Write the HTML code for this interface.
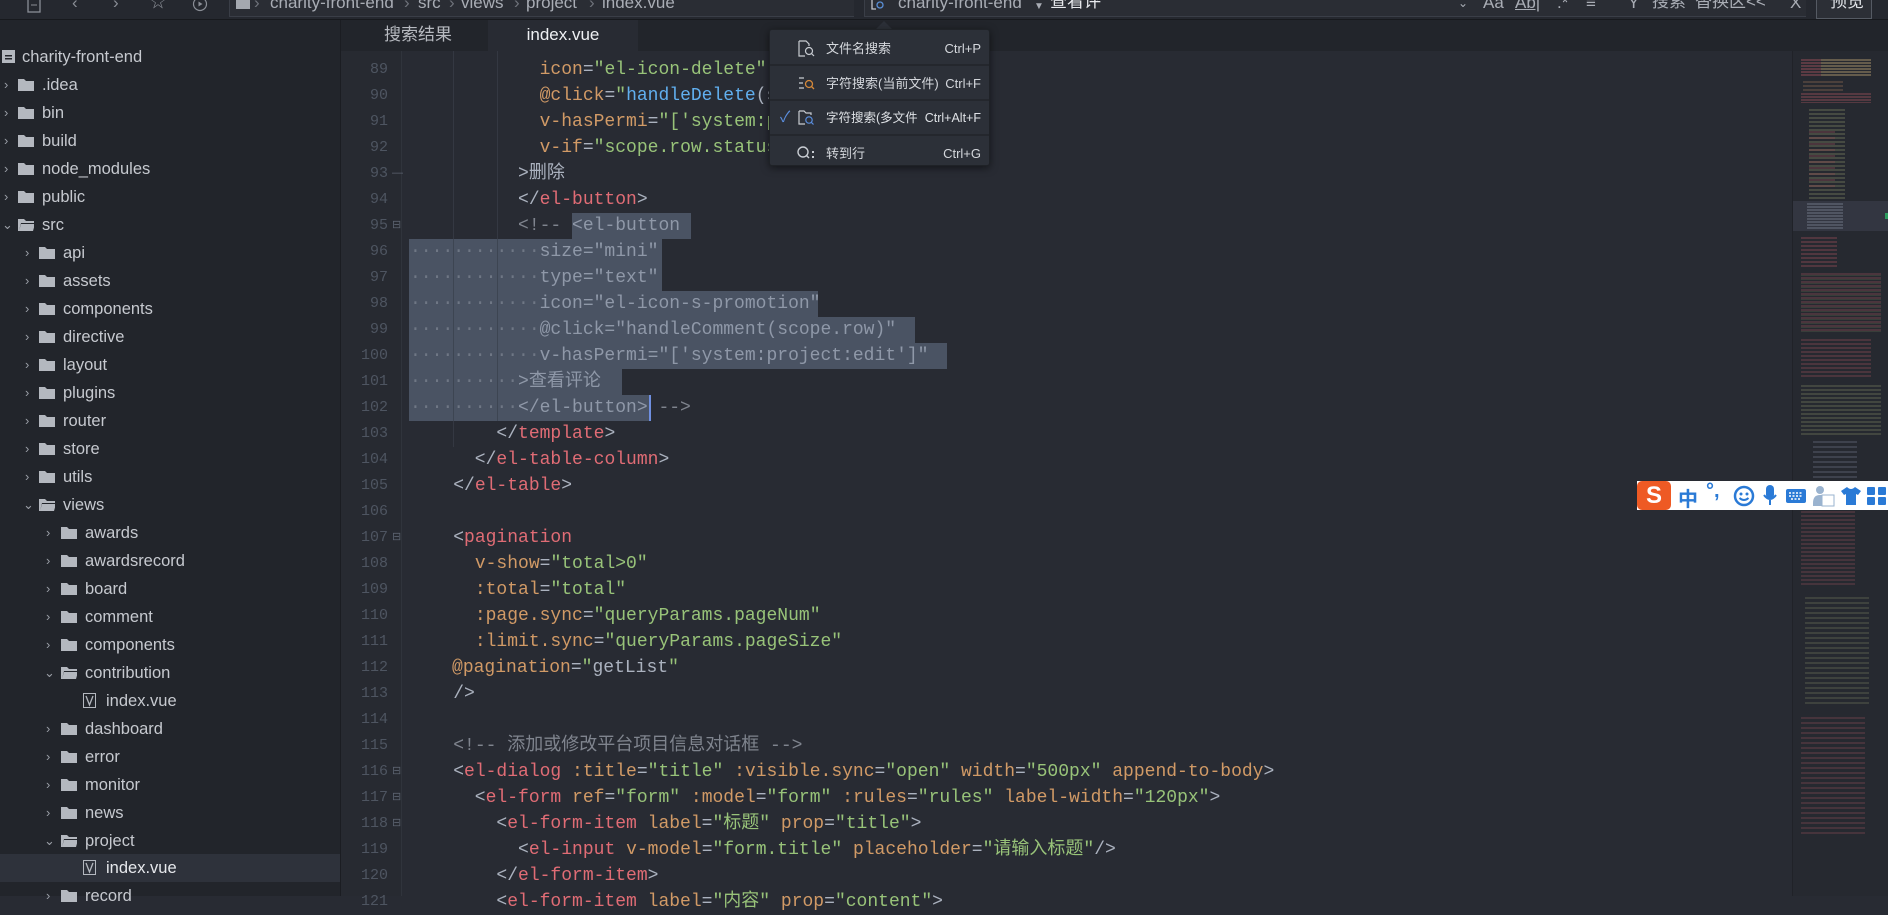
<!DOCTYPE html>
<html><head><meta charset="utf-8">
<style>
*{margin:0;padding:0;box-sizing:border-box}
body{width:1888px;height:896px;overflow:hidden;background:#282b33;font-family:"Liberation Sans","Noto Sans CJK SC",sans-serif;position:relative;color:#c5c8ce}
.abs{position:absolute}
#top{left:0;top:0;width:1888px;height:20px;background:#25282f;border-bottom:1px solid #17191d;overflow:hidden}
#top .t{position:absolute;top:-6px;font-size:17px;line-height:17px;color:#a9adb5;white-space:nowrap}
#side{left:0;top:20px;width:341px;height:876px;background:#22252b;border-right:1px solid #1b1d22}
.row{position:absolute;left:0;width:340px;height:28px;line-height:28px;font-size:16.5px;color:#c6c9cf;white-space:nowrap}
.row.sel{background:#2e323b}
.chev{position:absolute;top:0;font-size:13px;color:#9a9ea6}
.fold{position:absolute;top:7px;width:16px;height:13px}
#tabs{left:341px;top:20px;width:1547px;height:31px;background:#22252b}
.tab{position:absolute;top:0;height:31px;line-height:30px;font-size:17px;text-align:center}
#gut{left:341px;top:51px;width:60px;height:845px;background:#272a31}
.ln{position:absolute;left:341px;width:47px;text-align:right;font-family:"Liberation Mono",monospace;font-size:15px;color:#4e5561;height:26px;line-height:26px}
.fm{position:absolute;left:392px;font-size:11px;color:#5c6370}
.cl{position:absolute;left:410px;height:26px;line-height:26px;font-family:"Liberation Mono","Noto Sans CJK SC",monospace;font-size:18px;white-space:pre;color:#abb2bf}
.sl{position:absolute;background:#4a5363;height:26px}
.p{color:#abb2bf}.t{color:#e06c75}.a{color:#d19a66}.s{color:#98c379}.f{color:#61afef}.c{color:#7f848e}.cs{color:#8f98a8}.d{color:#6f7785}
.g{position:absolute;width:1px;background:#343842}
#menu{left:769px;top:29px;width:221px;height:137px;background:#2c3038;border:1px solid #1f2227;border-radius:3px;box-shadow:0 2px 8px rgba(0,0,0,.5)}
.mi{position:absolute;left:0;width:219px;height:34px;font-size:13px;line-height:34px;color:#d4d7dc}
.mi .tx{position:absolute;left:56px;top:0;white-space:nowrap}
.mi .sc{position:absolute;right:8px;top:0;white-space:nowrap;font-family:"Liberation Sans",sans-serif;font-size:13px}
.sep{position:absolute;left:0;width:219px;height:2px;background:#24272d}
#mm{left:1792px;top:51px;width:96px;height:845px;border-left:1px solid #1d1f24;background:#262930;opacity:.7}
.mb{position:absolute;height:2px}
</style></head><body>

<div id="top" class="abs">
  <svg class="abs" style="left:26px;top:0" width="16" height="14"><rect x="2" y="-4" width="12" height="16" fill="none" stroke="#8a8e96" stroke-width="1.3"/><line x1="5" y1="5" x2="11" y2="5" stroke="#8a8e96"/></svg>
  <div class="t" style="left:72px;color:#8a8e96">‹</div>
  <div class="t" style="left:113px;color:#8a8e96">›</div>
  <div class="t" style="left:150px;color:#8a8e96;font-size:16px">☆</div>
  <svg class="abs" style="left:192px;top:-4px" width="16" height="16"><circle cx="8" cy="8" r="6.5" fill="none" stroke="#8a8e96" stroke-width="1.2"/><path d="M6.5 5.5 L10.5 8 L6.5 10.5Z" fill="#8a8e96"/></svg>
  <div class="abs" style="left:229px;top:-2px;width:625px;height:19px;border-left:1px solid #3a3e47;border-bottom:1px solid #3a3e47;background:#2a2d34"></div>
  <div class="abs" style="left:236px;top:0;width:14px;height:9px;background:#a4a8af"></div>
  <div class="t" style="left:254px;color:#6f737b">›</div>
  <div class="t" style="left:270px">charity-front-end</div>
  <div class="t" style="left:404px;color:#6f737b">›</div>
  <div class="t" style="left:418px">src</div>
  <div class="t" style="left:449px;color:#6f737b">›</div>
  <div class="t" style="left:461px">views</div>
  <div class="t" style="left:514px;color:#6f737b">›</div>
  <div class="t" style="left:526px">project</div>
  <div class="t" style="left:589px;color:#6f737b">›</div>
  <div class="t" style="left:602px">index.vue</div>
  <div class="abs" style="left:864px;top:-2px;width:942px;height:19px;border-left:1px solid #3a3e47;border-bottom:1px solid #3a3e47;background:#2a2d34"></div>
  <svg class="abs" style="left:870px;top:0" width="16" height="12"><path d="M2 -2 V9 H6" fill="none" stroke="#c0c4cb" stroke-width="1.3"/><circle cx="10" cy="5" r="3" fill="none" stroke="#5a8fd6" stroke-width="1.3"/></svg>
  <div class="t" style="left:898px">charity-front-end</div>
  <div class="t" style="left:1034px;font-size:10px;top:-2px">▼</div>
  <div class="t" style="left:1050px;color:#e8eaee;top:-7px">查看评</div>
  <div class="t" style="left:1458px;font-size:12px;top:-5px">⌄</div>
  <div class="t" style="left:1483px">Aa</div>
  <div class="t" style="left:1515px;text-decoration:underline">Ab|</div>
  <div class="t" style="left:1557px">.*</div>
  <div class="t" style="left:1586px">≡</div>
  <div class="t" style="left:1628px">Y</div>
  <div class="t" style="left:1652px;top:-7px">搜索</div>
  <div class="t" style="left:1695px;top:-7px">替换区&lt;&lt;</div>
  <div class="t" style="left:1790px">X</div>
  <div class="abs" style="left:1816px;top:-2px;width:56px;height:21px;border:1px solid #555a63;background:#2c2f36"></div>
  <div class="t" style="left:1830px;color:#e0e3e8;top:-7px">预览</div>
</div>

<div id="side" class="abs">
  <div class="row" style="top:23px"><svg class="abs" style="left:2px;top:7px" width="14" height="14"><rect x="0" y="0" width="13" height="13" fill="#b4b8bf"/><rect x="3" y="5" width="7" height="1.5" fill="#22252b"/><rect x="3" y="8" width="7" height="1.5" fill="#22252b"/></svg><span class="abs" style="left:22px">charity-front-end</span></div>
</div>

<div id="tabs" class="abs">
  <div class="tab" style="left:7px;width:140px;color:#b7bac0;background:#22252b">搜索结果</div>
  <div class="tab" style="left:147px;width:150px;color:#eef0f3;background:#282b33">index.vue</div>
</div>

<div id="gut" class="abs"></div>
<div class="g" style="left:401px;top:51px;height:845px;background:#30343c"></div>

<div class="sl" style="left:572px;top:213px;width:119px"></div>
<div class="sl" style="left:409px;top:239px;width:253px"></div>
<div class="sl" style="left:409px;top:265px;width:253px"></div>
<div class="sl" style="left:409px;top:291px;width:409px"></div>
<div class="sl" style="left:409px;top:317px;width:506px"></div>
<div class="sl" style="left:409px;top:343px;width:538px"></div>
<div class="sl" style="left:409px;top:369px;width:213px"></div>
<div class="sl" style="left:409px;top:395px;width:240px"></div>
<div class="abs" style="left:649px;top:395px;width:2px;height:26px;background:#6f8fe0"></div>

<div class="g" style="left:453px;top:239px;height:182px;background:#3d4552"></div>
<div class="g" style="left:497px;top:239px;height:182px;background:#3d4552"></div>
<div class="g" style="left:453px;top:51px;height:188px"></div>
<div class="g" style="left:497px;top:51px;height:188px"></div>
<div class="g" style="left:453px;top:421px;height:26px"></div>

<div id="code">
<div class="ln" style="top:57px">89</div><div class="cl" style="top:57px">            <span class="a">icon</span>=<span class="s">"el-icon-delete"</span></div>
<div class="ln" style="top:83px">90</div><div class="cl" style="top:83px">            <span class="a">@click</span>=<span class="s">"</span><span class="f">handleDelete</span>(scope.row)<span class="s">"</span></div>
<div class="ln" style="top:109px">91</div><div class="cl" style="top:109px">            <span class="a">v-hasPermi</span>=<span class="s">"['system:project:remove']"</span></div>
<div class="ln" style="top:135px">92</div><div class="cl" style="top:135px">            <span class="a">v-if</span>=<span class="s">"scope.row.status == 0"</span></div>
<div class="ln" style="top:161px">93</div><div class="fm" style="top:167px">—</div><div class="cl" style="top:161px">          &gt;删除</div>
<div class="ln" style="top:187px">94</div><div class="cl" style="top:187px">          &lt;/<span class="t">el-button</span>&gt;</div>
<div class="ln" style="top:213px">95</div><div class="fm" style="top:218px">⊟</div><div class="cl" style="top:213px">          <span class="c">&lt;!-- </span><span class="cs">&lt;el-button</span></div>
<div class="ln" style="top:239px">96</div><div class="cl" style="top:239px"><span class="d">············</span><span class="cs">size="mini"</span></div>
<div class="ln" style="top:265px">97</div><div class="cl" style="top:265px"><span class="d">············</span><span class="cs">type="text"</span></div>
<div class="ln" style="top:291px">98</div><div class="cl" style="top:291px"><span class="d">············</span><span class="cs">icon="el-icon-s-promotion"</span></div>
<div class="ln" style="top:317px">99</div><div class="cl" style="top:317px"><span class="d">············</span><span class="cs">@click="handleComment(scope.row)"</span></div>
<div class="ln" style="top:343px">100</div><div class="cl" style="top:343px"><span class="d">············</span><span class="cs">v-hasPermi="['system:project:edit']"</span></div>
<div class="ln" style="top:369px">101</div><div class="cl" style="top:369px"><span class="d">··········</span><span class="cs">&gt;查看评论</span></div>
<div class="ln" style="top:395px">102</div><div class="cl" style="top:395px"><span class="d">··········</span><span class="cs">&lt;/el-button&gt;</span><span class="c"> --&gt;</span></div>
<div class="ln" style="top:421px">103</div><div class="cl" style="top:421px">        &lt;/<span class="t">template</span>&gt;</div>
<div class="ln" style="top:447px">104</div><div class="cl" style="top:447px">      &lt;/<span class="t">el-table-column</span>&gt;</div>
<div class="ln" style="top:473px">105</div><div class="cl" style="top:473px">    &lt;/<span class="t">el-table</span>&gt;</div>
<div class="ln" style="top:499px">106</div>
<div class="ln" style="top:525px">107</div><div class="fm" style="top:530px">⊟</div><div class="cl" style="top:525px">    &lt;<span class="t">pagination</span></div>
<div class="ln" style="top:551px">108</div><div class="cl" style="top:551px">      <span class="a">v-show</span>=<span class="s">"total&gt;0"</span></div>
<div class="ln" style="top:577px">109</div><div class="cl" style="top:577px">      <span class="a">:total</span>=<span class="s">"total"</span></div>
<div class="ln" style="top:603px">110</div><div class="cl" style="top:603px">      <span class="a">:page.sync</span>=<span class="s">"queryParams.pageNum"</span></div>
<div class="ln" style="top:629px">111</div><div class="cl" style="top:629px">      <span class="a">:limit.sync</span>=<span class="s">"queryParams.pageSize"</span></div>
<div class="ln" style="top:655px">112</div><div class="cl" style="top:655px;left:398px">     <span class="a">@pagination</span>=<span class="s">"</span>getList<span class="s">"</span></div>
<div class="ln" style="top:681px">113</div><div class="cl" style="top:681px">    /&gt;</div>
<div class="ln" style="top:707px">114</div>
<div class="ln" style="top:733px">115</div><div class="cl" style="top:733px">    <span class="c">&lt;!-- 添加或修改平台项目信息对话框 --&gt;</span></div>
<div class="ln" style="top:759px">116</div><div class="fm" style="top:764px">⊟</div><div class="cl" style="top:759px">    &lt;<span class="t">el-dialog</span> <span class="a">:title</span>=<span class="s">"title"</span> <span class="a">:visible.sync</span>=<span class="s">"open"</span> <span class="a">width</span>=<span class="s">"500px"</span> <span class="a">append-to-body</span>&gt;</div>
<div class="ln" style="top:785px">117</div><div class="fm" style="top:790px">⊟</div><div class="cl" style="top:785px">      &lt;<span class="t">el-form</span> <span class="a">ref</span>=<span class="s">"form"</span> <span class="a">:model</span>=<span class="s">"form"</span> <span class="a">:rules</span>=<span class="s">"rules"</span> <span class="a">label-width</span>=<span class="s">"120px"</span>&gt;</div>
<div class="ln" style="top:811px">118</div><div class="fm" style="top:816px">⊟</div><div class="cl" style="top:811px">        &lt;<span class="t">el-form-item</span> <span class="a">label</span>=<span class="s">"标题"</span> <span class="a">prop</span>=<span class="s">"title"</span>&gt;</div>
<div class="ln" style="top:837px">119</div><div class="cl" style="top:837px">          &lt;<span class="t">el-input</span> <span class="a">v-model</span>=<span class="s">"form.title"</span> <span class="a">placeholder</span>=<span class="s">"请输入标题"</span>/&gt;</div>
<div class="ln" style="top:863px">120</div><div class="cl" style="top:863px">        &lt;/<span class="t">el-form-item</span>&gt;</div>
<div class="ln" style="top:889px">121</div><div class="cl" style="top:889px">        &lt;<span class="t">el-form-item</span> <span class="a">label</span>=<span class="s">"内容"</span> <span class="a">prop</span>=<span class="s">"content"</span>&gt;</div>
</div>

<div class="row" style="top:71px"><span class="chev" style="left:4px">›</span><svg class="fold" style="left:18px"><path d="M0 1 H6 L8 3 H16 V13 H0Z" fill="#b4b8bf"/></svg><span class="abs" style="left:42px">.idea</span></div>
<div class="row" style="top:99px"><span class="chev" style="left:4px">›</span><svg class="fold" style="left:18px"><path d="M0 1 H6 L8 3 H16 V13 H0Z" fill="#b4b8bf"/></svg><span class="abs" style="left:42px">bin</span></div>
<div class="row" style="top:127px"><span class="chev" style="left:4px">›</span><svg class="fold" style="left:18px"><path d="M0 1 H6 L8 3 H16 V13 H0Z" fill="#b4b8bf"/></svg><span class="abs" style="left:42px">build</span></div>
<div class="row" style="top:155px"><span class="chev" style="left:4px">›</span><svg class="fold" style="left:18px"><path d="M0 1 H6 L8 3 H16 V13 H0Z" fill="#b4b8bf"/></svg><span class="abs" style="left:42px">node_modules</span></div>
<div class="row" style="top:183px"><span class="chev" style="left:4px">›</span><svg class="fold" style="left:18px"><path d="M0 1 H6 L8 3 H16 V13 H0Z" fill="#b4b8bf"/></svg><span class="abs" style="left:42px">public</span></div>
<div class="row" style="top:211px"><span class="chev" style="left:2px">⌄</span><svg class="fold" style="left:18px"><path d="M0 1 H6 L8 3 H16 V5 H3 L1 13 H0Z M3 6 H17 L15 13 H1Z" fill="#b4b8bf"/></svg><span class="abs" style="left:42px">src</span></div>
<div class="row" style="top:239px"><span class="chev" style="left:25px">›</span><svg class="fold" style="left:39px"><path d="M0 1 H6 L8 3 H16 V13 H0Z" fill="#b4b8bf"/></svg><span class="abs" style="left:63px">api</span></div>
<div class="row" style="top:267px"><span class="chev" style="left:25px">›</span><svg class="fold" style="left:39px"><path d="M0 1 H6 L8 3 H16 V13 H0Z" fill="#b4b8bf"/></svg><span class="abs" style="left:63px">assets</span></div>
<div class="row" style="top:295px"><span class="chev" style="left:25px">›</span><svg class="fold" style="left:39px"><path d="M0 1 H6 L8 3 H16 V13 H0Z" fill="#b4b8bf"/></svg><span class="abs" style="left:63px">components</span></div>
<div class="row" style="top:323px"><span class="chev" style="left:25px">›</span><svg class="fold" style="left:39px"><path d="M0 1 H6 L8 3 H16 V13 H0Z" fill="#b4b8bf"/></svg><span class="abs" style="left:63px">directive</span></div>
<div class="row" style="top:351px"><span class="chev" style="left:25px">›</span><svg class="fold" style="left:39px"><path d="M0 1 H6 L8 3 H16 V13 H0Z" fill="#b4b8bf"/></svg><span class="abs" style="left:63px">layout</span></div>
<div class="row" style="top:379px"><span class="chev" style="left:25px">›</span><svg class="fold" style="left:39px"><path d="M0 1 H6 L8 3 H16 V13 H0Z" fill="#b4b8bf"/></svg><span class="abs" style="left:63px">plugins</span></div>
<div class="row" style="top:407px"><span class="chev" style="left:25px">›</span><svg class="fold" style="left:39px"><path d="M0 1 H6 L8 3 H16 V13 H0Z" fill="#b4b8bf"/></svg><span class="abs" style="left:63px">router</span></div>
<div class="row" style="top:435px"><span class="chev" style="left:25px">›</span><svg class="fold" style="left:39px"><path d="M0 1 H6 L8 3 H16 V13 H0Z" fill="#b4b8bf"/></svg><span class="abs" style="left:63px">store</span></div>
<div class="row" style="top:463px"><span class="chev" style="left:25px">›</span><svg class="fold" style="left:39px"><path d="M0 1 H6 L8 3 H16 V13 H0Z" fill="#b4b8bf"/></svg><span class="abs" style="left:63px">utils</span></div>
<div class="row" style="top:491px"><span class="chev" style="left:23px">⌄</span><svg class="fold" style="left:39px"><path d="M0 1 H6 L8 3 H16 V5 H3 L1 13 H0Z M3 6 H17 L15 13 H1Z" fill="#b4b8bf"/></svg><span class="abs" style="left:63px">views</span></div>
<div class="row" style="top:519px"><span class="chev" style="left:46px">›</span><svg class="fold" style="left:61px"><path d="M0 1 H6 L8 3 H16 V13 H0Z" fill="#b4b8bf"/></svg><span class="abs" style="left:85px">awards</span></div>
<div class="row" style="top:547px"><span class="chev" style="left:46px">›</span><svg class="fold" style="left:61px"><path d="M0 1 H6 L8 3 H16 V13 H0Z" fill="#b4b8bf"/></svg><span class="abs" style="left:85px">awardsrecord</span></div>
<div class="row" style="top:575px"><span class="chev" style="left:46px">›</span><svg class="fold" style="left:61px"><path d="M0 1 H6 L8 3 H16 V13 H0Z" fill="#b4b8bf"/></svg><span class="abs" style="left:85px">board</span></div>
<div class="row" style="top:603px"><span class="chev" style="left:46px">›</span><svg class="fold" style="left:61px"><path d="M0 1 H6 L8 3 H16 V13 H0Z" fill="#b4b8bf"/></svg><span class="abs" style="left:85px">comment</span></div>
<div class="row" style="top:631px"><span class="chev" style="left:46px">›</span><svg class="fold" style="left:61px"><path d="M0 1 H6 L8 3 H16 V13 H0Z" fill="#b4b8bf"/></svg><span class="abs" style="left:85px">components</span></div>
<div class="row" style="top:659px"><span class="chev" style="left:44px">⌄</span><svg class="fold" style="left:61px"><path d="M0 1 H6 L8 3 H16 V5 H3 L1 13 H0Z M3 6 H17 L15 13 H1Z" fill="#b4b8bf"/></svg><span class="abs" style="left:85px">contribution</span></div>
<div class="row" style="top:687px"><svg class="abs" style="left:83px;top:6px" width="14" height="16"><rect x="0.5" y="0.5" width="12" height="14" fill="none" stroke="#b4b8bf"/><path d="M3 3 L6.5 12 L10 3" fill="none" stroke="#b4b8bf" stroke-width="1.3"/></svg><span class="abs" style="left:106px">index.vue</span></div>
<div class="row" style="top:715px"><span class="chev" style="left:46px">›</span><svg class="fold" style="left:61px"><path d="M0 1 H6 L8 3 H16 V13 H0Z" fill="#b4b8bf"/></svg><span class="abs" style="left:85px">dashboard</span></div>
<div class="row" style="top:743px"><span class="chev" style="left:46px">›</span><svg class="fold" style="left:61px"><path d="M0 1 H6 L8 3 H16 V13 H0Z" fill="#b4b8bf"/></svg><span class="abs" style="left:85px">error</span></div>
<div class="row" style="top:771px"><span class="chev" style="left:46px">›</span><svg class="fold" style="left:61px"><path d="M0 1 H6 L8 3 H16 V13 H0Z" fill="#b4b8bf"/></svg><span class="abs" style="left:85px">monitor</span></div>
<div class="row" style="top:799px"><span class="chev" style="left:46px">›</span><svg class="fold" style="left:61px"><path d="M0 1 H6 L8 3 H16 V13 H0Z" fill="#b4b8bf"/></svg><span class="abs" style="left:85px">news</span></div>
<div class="row" style="top:827px"><span class="chev" style="left:44px">⌄</span><svg class="fold" style="left:61px"><path d="M0 1 H6 L8 3 H16 V5 H3 L1 13 H0Z M3 6 H17 L15 13 H1Z" fill="#b4b8bf"/></svg><span class="abs" style="left:85px">project</span></div>
<div class="row sel" style="top:854px"><svg class="abs" style="left:83px;top:6px" width="14" height="16"><rect x="0.5" y="0.5" width="12" height="14" fill="none" stroke="#b4b8bf"/><path d="M3 3 L6.5 12 L10 3" fill="none" stroke="#b4b8bf" stroke-width="1.3"/></svg><span class="abs" style="left:106px;color:#e6e8ec">index.vue</span></div>
<div class="row" style="top:882px"><span class="chev" style="left:46px">›</span><svg class="fold" style="left:61px"><path d="M0 1 H6 L8 3 H16 V13 H0Z" fill="#b4b8bf"/></svg><span class="abs" style="left:85px">record</span></div>

<div id="mm" class="abs">
  <div class="mb" style="left:8px;top:8px;width:70px;height:18px;background:repeating-linear-gradient(to bottom,rgba(190,90,100,.5) 0 2px,transparent 2px 3px);"></div>
  <div class="mb" style="left:28px;top:8px;width:50px;height:18px;background:repeating-linear-gradient(to bottom,rgba(140,160,100,.5) 0 2px,transparent 2px 3px);"></div>
  <div class="mb" style="left:10px;top:30px;width:40px;height:10px;background:repeating-linear-gradient(to bottom,rgba(170,120,90,.4) 0 2px,transparent 2px 4px);"></div>
  <div class="mb" style="left:8px;top:42px;width:70px;height:10px;background:repeating-linear-gradient(to bottom,rgba(190,90,100,.45) 0 2px,transparent 2px 3px);"></div>
  <div class="mb" style="left:16px;top:58px;width:36px;height:90px;background:repeating-linear-gradient(to bottom,rgba(150,160,110,.4) 0 2px,transparent 2px 4px);"></div>
  <div class="mb" style="left:16px;top:80px;width:26px;height:60px;background:repeating-linear-gradient(to bottom,rgba(190,90,100,.35) 0 2px,transparent 2px 6px);"></div>
  <div class="mb" style="left:0;top:150px;width:96px;height:30px;background:rgba(110,120,140,.25)"></div>
  <div class="mb" style="left:14px;top:152px;width:36px;height:26px;background:repeating-linear-gradient(to bottom,rgba(160,170,190,.4) 0 2px,transparent 2px 3px);"></div>
  <div class="mb" style="left:8px;top:186px;width:36px;height:30px;background:repeating-linear-gradient(to bottom,rgba(190,90,100,.4) 0 2px,transparent 2px 4px);"></div>
  <div class="mb" style="left:8px;top:222px;width:80px;height:60px;background:repeating-linear-gradient(to bottom,rgba(190,90,100,.35) 0 2px,rgba(140,160,100,.25) 2px 3px,transparent 3px 4px);"></div>
  <div class="mb" style="left:8px;top:288px;width:70px;height:40px;background:repeating-linear-gradient(to bottom,rgba(190,90,100,.35) 0 2px,transparent 2px 4px);"></div>
  <div class="mb" style="left:8px;top:334px;width:80px;height:50px;background:repeating-linear-gradient(to bottom,rgba(150,160,110,.35) 0 2px,transparent 2px 4px);"></div>
  <div class="mb" style="left:20px;top:390px;width:44px;height:60px;background:repeating-linear-gradient(to bottom,rgba(150,160,180,.3) 0 2px,transparent 2px 5px);"></div>
  <div class="mb" style="left:8px;top:456px;width:54px;height:80px;background:repeating-linear-gradient(to bottom,rgba(190,90,100,.3) 0 2px,transparent 2px 4px);"></div>
  <div class="mb" style="left:12px;top:546px;width:64px;height:110px;background:repeating-linear-gradient(to bottom,rgba(150,160,110,.3) 0 2px,transparent 2px 5px);"></div>
  <div class="mb" style="left:8px;top:666px;width:64px;height:120px;background:repeating-linear-gradient(to bottom,rgba(190,90,100,.3) 0 2px,transparent 2px 5px);"></div>
  <div class="mb" style="left:92px;top:162px;width:4px;height:6px;background:#2ecc71"></div>
</div>

<div class="abs" style="left:1637px;top:481px;width:251px;height:29px;background:#fff"></div>
<div class="abs" style="left:1637px;top:481px;width:34px;height:29px;background:#ee5a24;border-radius:5px;color:#fff;font-weight:bold;font-size:24px;line-height:29px;text-align:center">S</div>
<div class="abs" style="left:1678px;top:483px;font-size:20px;font-weight:bold;color:#2a7ad6">中</div>
<div class="abs" style="left:1706px;top:480px;font-size:20px;font-weight:bold;color:#2a7ad6">°,</div>
<svg class="abs" style="left:1733px;top:485px" width="22" height="22"><circle cx="11" cy="11" r="9" fill="none" stroke="#2a7ad6" stroke-width="2.5"/><circle cx="8" cy="9" r="1.5" fill="#2a7ad6"/><circle cx="14" cy="9" r="1.5" fill="#2a7ad6"/><path d="M6.5 13 Q11 17 15.5 13" fill="none" stroke="#2a7ad6" stroke-width="2"/></svg>
<svg class="abs" style="left:1762px;top:484px" width="16" height="24"><rect x="4" y="1" width="8" height="14" rx="4" fill="#2a7ad6"/><path d="M2 11 Q8 19 14 11 M8 16 V21" fill="none" stroke="#2a7ad6" stroke-width="2"/></svg>
<svg class="abs" style="left:1785px;top:488px" width="22" height="16"><rect x="1" y="1" width="20" height="14" rx="2" fill="#2a7ad6"/><path d="M4 5 H18 M4 8 H18 M6 11 H16" stroke="#fff" stroke-width="1.5" stroke-dasharray="2 1.5"/></svg>
<svg class="abs" style="left:1812px;top:485px" width="24" height="22"><circle cx="8" cy="5" r="4" fill="#9ab3cf"/><path d="M1 18 Q1 10 8 10 H12 V21 H1Z" fill="#9ab3cf"/><rect x="10" y="10" width="12" height="11" fill="#fff" stroke="#9ab3cf"/></svg>
<svg class="abs" style="left:1840px;top:486px" width="22" height="20"><path d="M7 1 L1 5 L4 9 L6 8 V19 H16 V8 L18 9 L21 5 L15 1 Q11 5 7 1Z" fill="#2a7ad6"/></svg>
<svg class="abs" style="left:1866px;top:486px" width="22" height="20"><rect x="1" y="1" width="8" height="8" rx="1" fill="#2a7ad6"/><rect x="12" y="1" width="8" height="8" rx="1" fill="#2a7ad6"/><rect x="1" y="11" width="8" height="8" rx="1" fill="#2a7ad6"/><rect x="12" y="11" width="8" height="8" rx="1" fill="#2a7ad6"/></svg>

<div class="abs" style="left:876px;top:21px;width:0;height:0;border-left:8px solid transparent;border-right:8px solid transparent;border-bottom:8px solid #2c3038"></div>
<div id="menu" class="abs">
  <div class="mi" style="top:2px"><svg class="abs" style="left:28px;top:8px" width="18" height="18"><path d="M1 1 H8 L11 4 V6 M1 1 V16 H7" fill="none" stroke="#c8ccd2" stroke-width="1.2"/><circle cx="11" cy="11" r="3.5" fill="none" stroke="#c8ccd2" stroke-width="1.2"/><path d="M13.5 13.5 L16 16" stroke="#c8ccd2" stroke-width="1.2"/></svg><span class="tx">文件名搜索</span><span class="sc">Ctrl+P</span></div>
  <div class="sep" style="top:34px"></div>
  <div class="mi" style="top:37px"><svg class="abs" style="left:28px;top:8px" width="18" height="18"><path d="M1 3 H6 M1 8 H5 M1 13 H6" stroke="#c8ccd2" stroke-width="1.2"/><circle cx="11" cy="9" r="3.5" fill="none" stroke="#d6893a" stroke-width="1.3"/><path d="M13.5 11.5 L16 14" stroke="#d6893a" stroke-width="1.3"/></svg><span class="tx">字符搜索(当前文件)</span><span class="sc">Ctrl+F</span></div>
  <div class="sep" style="top:69px"></div>
  <div class="mi" style="top:71px;color:#dfe2e6"><span class="abs" style="left:10px;top:0;color:#5b8fe0;font-size:15px">✓</span><svg class="abs" style="left:28px;top:8px" width="18" height="18"><path d="M1 2 H6 L8 4 H13 V6 M1 2 V15 H7" fill="none" stroke="#c8ccd2" stroke-width="1.2"/><circle cx="11" cy="11" r="3.2" fill="none" stroke="#5b8fe0" stroke-width="1.2"/><path d="M13.3 13.3 L15.5 15.5" stroke="#5b8fe0" stroke-width="1.2"/></svg><span class="tx" style="font-size:12.5px">字符搜索(多文件</span><span class="sc" style="font-size:12.5px">Ctrl+Alt+F</span></div>
  <div class="sep" style="top:104px"></div>
  <div class="mi" style="top:107px"><svg class="abs" style="left:26px;top:8px" width="20" height="18"><circle cx="7" cy="7" r="5" fill="none" stroke="#c8ccd2" stroke-width="1.4"/><path d="M10.5 10.5 L13 13" stroke="#c8ccd2" stroke-width="1.4"/><rect x="16" y="6" width="2" height="2" fill="#c8ccd2"/><rect x="16" y="11" width="2" height="2" fill="#c8ccd2"/></svg><span class="tx">转到行</span><span class="sc">Ctrl+G</span></div>
</div>

</body></html>
